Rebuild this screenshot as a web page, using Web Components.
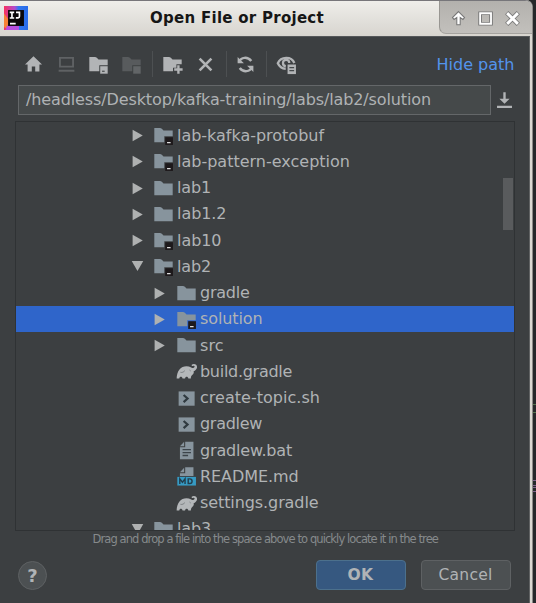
<!DOCTYPE html>
<html lang="en"><head><meta charset="utf-8"><title>Open File or Project</title>
<style>
html,body{margin:0;width:536px;height:603px;overflow:hidden;background:#25282a}
body{font-family:"DejaVu Sans",Verdana,sans-serif}
</style></head><body>
<file-dialog></file-dialog>
<script>
const define=(name,html,setup)=>customElements.define(name,class extends HTMLElement{
  connectedCallback(){
    if(this.shadowRoot)return;
    const t=document.createElement('template');t.innerHTML=html;
    this.attachShadow({mode:'open'}).append(t.content.cloneNode(true));
    if(setup)setup(this,this.shadowRoot);
  }
});

const FOLDER='M1 13.2h14V4.2H8L6.7 2.9A2 2 0 0 0 5.3 2.3H1z';
const FOLDER_CUT='M1 13.2h7.6V8.6H15V4.2H8L6.7 2.9A2 2 0 0 0 5.3 2.3H1z';
const ELEPHANT='<path fill="#b4b7b9" d="M15.300 2.900c-1-1-2.600-.8-3.300 0-.2.4 0 .8.3.9.3.2.6-.1.900-.2.7-.2 1.200.4.900 1-.5 1-1.500.9-2.500.3C8.500 3.300 4.600 4 2.800 6.200 1.100 8.200.5 10.800.5 13.400h2c.1-1 .6-1.400 1.200-1.400s1.200.4 1.300 1.400h1.900c.1-1 .6-1.400 1.200-1.400s1.200.4 1.300 1.400h1.900c0-1.300.4-2.200 1.200-2.900 1.100-.7 1.200-1.900.9-2.700 2.200-.7 3.600-3.200 1.900-4.900z"/><path d="M3.400 8.600c1.200.4 2.400-.2 3.300-1.200M10.300 6.900l.9.7" fill="none" stroke="#6b6f72" stroke-width=".6"/>';
const SHELL='<path fill="#87949d" d="M2 2.600h12.200v10.900H2z"/><path fill="none" stroke="#303a40" stroke-width="1.700" d="M5.800 5.300l3 2.700-3 2.800"/>';
const ICONS={
  folder:`<path fill="#87949d" d="${FOLDER}"/>`,
  module:`<path fill="#87949d" d="${FOLDER_CUT}"/><path fill="#1d191b" d="M9.300 9.300H15.200v5.900H9.300z"/><path fill="#eee" d="M10.700 13h2.700v.9h-2.700z"/>`,
  gradle:ELEPHANT,shell:SHELL,
  text:'<path fill="#87949d" d="M7 1.300h6.300v13.400H3V5.500h4z"/><path fill="#87949d" d="M6.200 1.300v3.400H3z"/><path stroke="#3c444a" stroke-width="1" d="M5 7.400h6.400M5 9.600h6.400M5 11.800h4.200"/>',
  md:'<path fill="#87949d" d="M7 1h6.300v6.600H3V5.500h4z"/><path fill="#87949d" d="M6.200 1.300v3.400H3z"/><path fill="#369bc4" d="M1 8.300h14.200v6.600H1z"/><path fill="none" stroke="#233e4d" stroke-width="1.100" d="M2.900 13.800V9.800l2 2.600 2-2.600v4M9.300 9.800v3.500h1.300c2.200 0 2.200-3.500 0-3.500z"/>',
  home:'<path fill="#b2b4b6" d="M8 1.700L14.500 8h-2v5.300H9.300V9.500H6.700v3.800H3.500V8h-2z"/>',
  desktop:'<path fill="none" stroke="#5f6264" stroke-width="1.400" d="M3 3h10v6.600H3z"/><path fill="#5f6264" d="M2 12h12v1.500H2z"/>',
  project:`<path fill="#b2b4b6" d="${FOLDER_CUT}"/><path fill="#b2b4b6" d="M9.300 9.300H15v5.700H9.300z"/><path fill="#45494b" d="M10.700 12.700h2v.9h-2z"/>`,
  moduleOff:`<path fill="#585b5d" d="${FOLDER_CUT}"/><path fill="#626567" d="M9.300 9.300H15v5.700H9.300z"/>`,
  newFolder:'<path fill="#b2b4b6" d="M1 13.200h7.400V10.400H11V7.800h4V4.200H8L6.700 2.900A2 2 0 0 0 5.300 2.300H1z"/><path stroke="#b2b4b6" stroke-width="1.800" d="M12.500 8.600V15M9.300 11.800h6.400"/>',
  remove:'<path stroke="#b2b4b6" stroke-width="2" d="M3.500 3.500l9 9M12.500 3.500l-9 9"/>',
  refresh:'<path fill="none" stroke="#b2b4b6" stroke-width="1.900" d="M3 6.200C4.500 2.200 9.600 1.800 12.400 5.400M13 9.800c-1.500 4-6.600 4.400-9.400.8"/><path fill="#b2b4b6" d="M2 2.300v4.800h4.800zM14 13.700V8.900H9.200z"/>',
  eye:'<path fill="none" stroke="#b2b4b6" stroke-width="1.800" d="M7.400 11.200C4.500 11 2.400 9.200 1.400 7c2.300-5.300 10.400-5.300 12.600-.2"/><path fill="none" stroke="#b2b4b6" stroke-width="1.700" d="M7.500 9.200a2.400 2.400 0 1 1 2.600-2.300"/><path fill="#b2b4b6" d="M8.800 8h6.400v7.300H8.800z"/><path stroke="#45494b" stroke-width="1" d="M10.200 10.400h3.600M10.200 12.700h3.600"/>',
  download:'<path fill="#b2b4b6" d="M7.100 1.700h1.800v5h3L8 10.500 4.100 6.700h3zM2.300 12h11.400v1.700H2.300z"/>',
  up:'<path fill="#fff" stroke="#777" stroke-width=".8" d="M8 2.700l4.600 4.600-1.200 1.400-2.100-1.500v5.600H6.700V7.200L4.600 8.700 3.400 7.300z"/>',
  max:'<path fill="none" stroke="#777" stroke-width="2.800" d="M3.900 4h8.300v8H3.900z"/><path fill="none" stroke="#fff" stroke-width="1.400" d="M3.900 4h8.300v8H3.900z"/>',
  close:'<path stroke="#777" stroke-width="3.500" d="M3.600 3.600l8.800 8.800M12.400 3.600l-8.800 8.800"/><path stroke="#fff" stroke-width="2.200" d="M3.900 3.900l8.200 8.200M12.100 3.900l-8.200 8.200"/>',
  right:'<path fill="#afb1b1" d="M4.300 3.700l7.700 4.300-7.700 4.300z"/>',
  down:'<path fill="#afb1b1" d="M3.600 3.800h8.800L8 11.500z"/>',
  idea:'<defs><linearGradient id="a"><stop stop-color="#f8315f"/><stop offset=".45" stop-color="#b04bd0"/><stop offset=".6" stop-color="#3277ed"/><stop offset="1" stop-color="#286bea"/></linearGradient></defs><path fill="url(#a)" d="M0 0h16v16H0z"/><path fill="#f88236" d="M0 5l3 4v7L0 14z"/><path fill="#b74fe0" d="M2 13h8v3H1z"/><path fill="#0a0709" d="M2.700 2.700h10.600v10.600H2.700z"/><path fill="none" stroke="#fff" stroke-width="1.100" d="M3.800 4.200h3M5.300 4.200v3.700M3.800 8h3M8 4.200h2.300v2.600c0 1.200-.9 1.200-2.400 1.100M4 11.700h3.800"/>'
};

define('ui-icon','<style>:host{display:block;flex:none;width:21px;height:21px}svg{display:block;width:100%;height:100%}</style><svg viewBox="0 0 16 16"></svg>',
  (h,r)=>r.querySelector('svg').innerHTML=ICONS[h.getAttribute('name')]);

/* Single-line label; "span" sets its advance width through letter spacing. */
define('ui-label','<style>:host{display:block;white-space:nowrap;flex:none}span{display:inline-block}</style><span></span>',
  (h,r)=>{const s=r.querySelector('span'),w=+h.getAttribute('span');s.textContent=h.getAttribute('text');
    if(w){const n=s.getBoundingClientRect().width;s.style.letterSpacing=(w-n)/s.textContent.length+'px';}});

define('title-bar',`<style>
:host{display:grid;grid-template-columns:32px 1fr 93px;height:36px;box-sizing:border-box;border-top:1px solid #77767a;background:linear-gradient(#efeeea,#dedcd7 70%,#d8d5cf);border-radius:0 7px 0 0;color:#161616}
.logo{width:24px;height:24px;margin:5px 0 0 4px}
.name{font-weight:bold;font-size:15px;line-height:18px;padding:8px 0 0 118px}
.buttons{display:flex;gap:6px;box-sizing:border-box;height:33px;padding:7px 0 0 8px;background:linear-gradient(#b3b1ad,#c2c0bc);border-left:1px solid #989692;border-bottom:1px solid #a5a39f;border-radius:0 6px 0 7px}
</style><ui-icon class="logo" name="idea"></ui-icon><div class="name"><ui-label text="Open File or Project" span="174"></ui-label></div>
<div class="buttons"><ui-icon name="up"></ui-icon><ui-icon name="max"></ui-icon><ui-icon name="close"></ui-icon></div>`);

define('tool-bar',`<style>
:host{display:flex;align-items:center;height:28px;padding:0 14px 0 23px}
ui-icon{margin-right:11.600px}
i{width:1px;height:26px;background:#4d5052;margin:0 9px 0 -1px}
i.near{margin:0 8px 0 -2px}
ui-label{margin-left:auto;color:#5394ec;font-size:16px}
</style><ui-icon name="home"></ui-icon><ui-icon name="desktop"></ui-icon><ui-icon name="project"></ui-icon><ui-icon name="moduleOff"></ui-icon><i></i><ui-icon name="newFolder"></ui-icon><ui-icon name="remove"></ui-icon><i class="near"></i><ui-icon name="refresh"></ui-icon><i></i><ui-icon name="eye"></ui-icon><ui-label text="Hide path" span="78"></ui-label>`);

define('path-field',`<style>
:host{display:flex;align-items:center;gap:4px;height:30px;margin:7px 0 0 18px}
.box{box-sizing:border-box;width:473px;height:30px;border:1px solid #646769;background:#45494a;color:#afb2b4;padding:4px 0 0 7px;font-size:16px;line-height:19px}
ui-icon{margin-left:-1px}
</style><div class="box"><ui-label text="/headless/Desktop/kafka-training/labs/lab2/solution" span="405"></ui-label></div><ui-icon name="download"></ui-icon>`);

define('tree-row',`<style>
:host{display:flex;align-items:center;height:26.250px;box-sizing:border-box;padding-left:110.500px;color:#b0b3b5;font-size:16px;line-height:20px}
:host([nested]){padding-left:133px}
:host([selected]){background:#2f65ca}
.arrow{width:21px;height:21px;margin-right:5.500px}
ui-label{margin-left:3.500px}
</style><div class="arrow"></div>`,(h,r)=>{
  const a=h.getAttribute('arrow');if(a)r.querySelector('.arrow').innerHTML=`<ui-icon name="${a}"></ui-icon>`;
  const i=document.createElement('ui-icon');i.setAttribute('name',h.getAttribute('icon'));
  if(!h.hasAttribute('nested'))r.querySelector('.arrow').style.marginRight='5px';
  const l=document.createElement('ui-label');l.setAttribute('text',h.getAttribute('text'));l.setAttribute('span',h.getAttribute('span'));
  r.append(i,l);
});

define('file-tree',`<style>
:host{display:block;position:relative;box-sizing:border-box;width:500px;height:410px;margin:6px 0 0 15px;padding-top:.4px;border:1px solid #2f3234;overflow:hidden}
.thumb{position:absolute;right:1px;top:56px;width:10px;height:52px;background:#595b5d}
</style><div class="rows"></div><div class="thumb"></div>`,(h,r)=>{
  r.querySelector('.rows').innerHTML=[
    ['lab-kafka-protobuf',147,'module','right',0],['lab-pattern-exception',173,'module','right',0],
    ['lab1',34,'folder','right',0],['lab1.2',49.5,'folder','right',0],['lab10',44.5,'module','right',0],
    ['lab2',34,'module','down',0],['gradle',49.5,'folder','right',1],['solution',62.5,'module','right',1],
    ['src',23.5,'folder','right',1],['build.gradle',92,'gradle','',1],['create-topic.sh',120,'shell','',1],
    ['gradlew',62,'shell','',1],['gradlew.bat',92,'text','',1],['README.md',98.5,'md','',1],
    ['settings.gradle',118.5,'gradle','',1],['lab3',34,'folder','down',0]
  ].map(([t,w,i,a,n])=>`<tree-row text="${t}" span="${w}" icon="${i}" arrow="${a}"${n?' nested':''}${t==='solution'?' selected':''}></tree-row>`).join('');
});

define('push-button',`<style>
:host{display:flex;align-items:center;justify-content:center;box-sizing:border-box;width:90px;height:30px;border:1px solid #5e6163;border-radius:4px;background:#4c5052;color:#b0b3b5;font-size:15.500px}
:host([primary]){background:#365880;border-color:#4c708c;font-weight:bold}
:host([round]){width:29px;height:29px;border-radius:50%;font:bold 18px "DejaVu Sans",sans-serif}
</style><slot></slot>`);

define('dialog-footer',`<style>
:host{display:block}
.hint{color:#868a8c;font-size:11.500px;line-height:14px;padding:1px 0 0 92.500px}
.bar{display:flex;align-items:center;height:30px;padding:14px 18px 0;gap:15px}
.gap{flex:1}
</style><div class="hint"><ui-label text="Drag and drop a file into the space above to quickly locate it in the tree" span="345.5"></ui-label></div>
<div class="bar"><push-button round><ui-label text="?"></ui-label></push-button><div class="gap"></div><push-button primary><ui-label text="OK" span="26"></ui-label></push-button><push-button><ui-label text="Cancel" span="54"></ui-label></push-button></div>`);

define('file-dialog',`<style>
:host{display:block;position:relative;width:536px;height:603px;overflow:hidden}
.frame{box-sizing:border-box;width:533px;height:603px;background:#dad8d2;border-right:1px solid #8b8986;border-radius:0 7px 0 0}
.body{box-sizing:border-box;width:529.500px;height:567px;background:#3c3f41;padding-top:13px;border-top:1px solid #55585a;border-right:1px solid #606263}
.mark{position:absolute;left:533px;width:3px;box-sizing:border-box;border:solid #53724d;border-width:1px 0}
</style><div class="frame"><title-bar></title-bar><div class="body"><tool-bar></tool-bar><path-field></path-field><file-tree></file-tree><dialog-footer></dialog-footer></div></div>
<div class="mark" style="top:404px;height:9px"></div><div class="mark" style="top:480px;height:6px;border-color:#80628c"></div><div class="mark" style="top:487px;height:5px;border-color:#80628c"></div>`);
</script></body></html>
